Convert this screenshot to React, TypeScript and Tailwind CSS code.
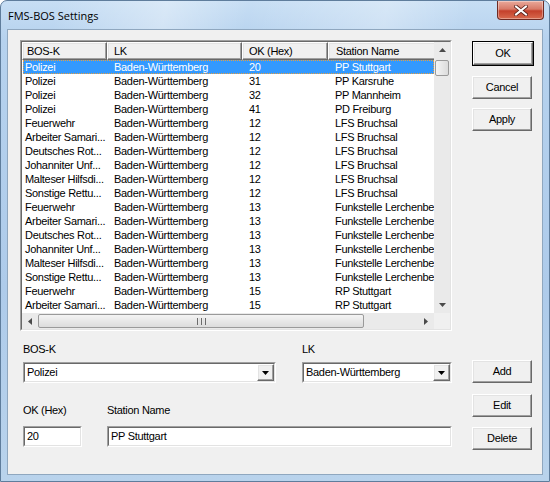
import React from 'react';

const rows: [string, string, string][] = [
  ['Polizei', '20', 'PP Stuttgart'],
  ['Polizei', '31', 'PP Karsruhe'],
  ['Polizei', '32', 'PP Mannheim'],
  ['Polizei', '41', 'PD Freiburg'],
  ['Feuerwehr', '12', 'LFS Bruchsal'],
  ['Arbeiter Samari...', '12', 'LFS Bruchsal'],
  ['Deutsches Rot...', '12', 'LFS Bruchsal'],
  ['Johanniter Unf...', '12', 'LFS Bruchsal'],
  ['Malteser Hilfsdi...', '12', 'LFS Bruchsal'],
  ['Sonstige Rettu...', '12', 'LFS Bruchsal'],
  ['Feuerwehr', '13', 'Funkstelle Lerchenberg'],
  ['Arbeiter Samari...', '13', 'Funkstelle Lerchenberg'],
  ['Deutsches Rot...', '13', 'Funkstelle Lerchenberg'],
  ['Johanniter Unf...', '13', 'Funkstelle Lerchenberg'],
  ['Malteser Hilfsdi...', '13', 'Funkstelle Lerchenberg'],
  ['Sonstige Rettu...', '13', 'Funkstelle Lerchenberg'],
  ['Feuerwehr', '15', 'RP Stuttgart'],
  ['Arbeiter Samari...', '15', 'RP Stuttgart'],
  ['Deutsches Rot...', '15', 'RP Stuttgart'],
];

const raised =
  'border border-t-white border-l-white border-r-[#696969] border-b-[#696969] shadow-[inset_-1px_-1px_0_#a0a0a0,inset_1px_1px_0_#e3e3e3] bg-[#f0f0f0]';

const Arrow = ({ dir, color = '#4a4a4a' }: { dir: 'up' | 'down' | 'left' | 'right'; color?: string }) => {
  const pts = {
    up: '0,4 7,4 3.5,0',
    down: '0,0 7,0 3.5,4',
    left: '4,0 4,7 0,3.5',
    right: '0,0 0,7 4,3.5',
  }[dir];
  const vertical = dir === 'up' || dir === 'down';
  return (
    <svg width={vertical ? 7 : 4} height={vertical ? 4 : 7} viewBox={vertical ? '0 0 7 4' : '0 0 4 7'}>
      <polygon points={pts} fill={color} />
    </svg>
  );
};

const Sunken = ({ className = '', children }: { className?: string; children?: React.ReactNode }) => (
  <div className={`border border-t-[#a0a0a0] border-l-[#a0a0a0] border-r-white border-b-white ${className}`}>
    <div className="h-full w-full border border-t-[#696969] border-l-[#696969] border-r-[#e3e3e3] border-b-[#e3e3e3] bg-white">
      {children}
    </div>
  </div>
);

const Button = ({ label, className = '' }: { label: string; className?: string }) => (
  <div className={`${raised} flex items-center justify-center w-[60px] h-[23px] text-[11px] text-black ${className}`}>
    {label}
  </div>
);

const Combo = ({ value, className = '' }: { value: string; className?: string }) => (
  <Sunken className={`h-[21px] ${className}`}>
    <div className="flex h-full items-center">
      <span className="flex-1 pl-[2px] text-[11px] leading-[13px]">{value}</span>
      <div className={`${raised} flex h-full w-[17px] items-center justify-center`}>
        <Arrow dir="down" color="#000" />
      </div>
    </div>
  </Sunken>
);

const Header = ({ label, w, pl }: { label: string; w: string; pl: string }) => (
  <div className={`${raised} ${w} ${pl} h-[18px] shrink-0 flex items-center text-[11px]`}>{label}</div>
);

const ListView = () => (
  <Sunken className="w-[432px] h-[291px]">
    <div className="flex h-full flex-col">
      <div className="flex min-h-0 flex-1">
        <div className="flex w-[412px] flex-col overflow-hidden">
          <div className="flex w-[460px]">
            <Header label="BOS-K" w="w-[85px]" pl="pl-[4px]" />
            <Header label="LK" w="w-[135px]" pl="pl-[6px]" />
            <Header label="OK (Hex)" w="w-[86px]" pl="pl-[6px]" />
            <Header label="Station Name" w="w-[154px]" pl="pl-[7px]" />
          </div>
          <div className="flex-1 overflow-hidden">
            {rows.map(([bos, ok, name], i) => (
              <div key={i} className="flex h-[14px] items-center text-[11px] leading-[14px] whitespace-nowrap">
                <div
                  className={`flex h-full w-[411px] items-center ${
                    i === 0 ? 'ml-[1px] bg-[#3399ff] text-white outline-1 outline-dotted outline-offset-[-1px] outline-[#e8a040]' : 'ml-[1px] text-black'
                  }`}
                >
                  <span className="w-[84px] shrink-0 overflow-hidden pl-[2px]">{bos}</span>
                  <span className="w-[135px] shrink-0 pl-[7px]">Baden-Württemberg</span>
                  <span className="w-[86px] shrink-0 pl-[7px]">{ok}</span>
                  <span className="shrink-0 pl-[7px]">{name}</span>
                </div>
              </div>
            ))}
          </div>
        </div>
        {/* vertical scrollbar */}
        <div className="flex w-[16px] flex-col bg-[#eaeaea]">
          <div className="flex h-[16px] items-center justify-center">
            <Arrow dir="up" />
          </div>
          <div className="mx-[1px] mt-[2px] h-[16px] rounded-[2px] border border-[#9a9a9a] bg-[linear-gradient(90deg,#f4f4f4,#dcdcdc)]" />
          <div className="flex-1" />
          <div className="flex h-[16px] items-center justify-center">
            <Arrow dir="down" />
          </div>
        </div>
      </div>
      {/* horizontal scrollbar */}
      <div className="flex h-[16px]">
        <div className="flex w-[412px] bg-[#eaeaea]">
          <div className="flex w-[16px] items-center justify-center">
            <Arrow dir="left" />
          </div>
          <div className="my-[1px] flex w-[326px] items-center justify-center rounded-[2px] border border-[#9a9a9a] bg-[linear-gradient(180deg,#f4f4f4,#dcdcdc)]">
            <div className="flex gap-[1px]">
              <div className="h-[7px] w-[1px] bg-[#6b6b6b]" />
              <div className="h-[7px] w-[1px] bg-[#e0e0e0]" />
              <div className="h-[7px] w-[1px] bg-[#6b6b6b]" />
              <div className="h-[7px] w-[1px] bg-[#e0e0e0]" />
              <div className="h-[7px] w-[1px] bg-[#6b6b6b]" />
            </div>
          </div>
          <div className="flex-1" />
          <div className="flex w-[16px] items-center justify-center">
            <Arrow dir="right" />
          </div>
        </div>
        <div className="w-[16px] bg-[#f0f0f0]" />
      </div>
    </div>
  </Sunken>
);

export default function App() {
  return (
    <div className="w-[550px] h-[482px] overflow-hidden font-['Liberation_Sans',Arial,sans-serif]">
      <div className="flex h-full flex-col rounded-t-[7px] border border-[#5f7d9c] bg-[linear-gradient(180deg,#c7def4_0%,#b6d2ee_8%,#aecbea_60%,#b9d3ec_100%)]">
        {/* title bar */}
        <div className="flex h-[28px] shrink-0 items-start bg-[linear-gradient(100deg,rgba(255,255,255,0)_10%,rgba(255,255,255,0.35)_30%,rgba(255,255,255,0)_45%,rgba(255,255,255,0.3)_70%,rgba(255,255,255,0)_85%)]">
          <span className="self-center pl-[7px] pt-[2px] font-['Open_Sans',sans-serif] text-[11px] text-black">FMS-BOS Settings</span>
          <div className="flex-1" />
          <div className="mr-[5px] flex h-[19px] w-[47px] items-center justify-center rounded-b-[4px] border border-t-0 border-[#6e2a22] bg-[linear-gradient(180deg,#e9a99b_0%,#d77a68_45%,#c4402b_55%,#d86a4e_100%)] shadow-[inset_0_0_0_1px_rgba(255,255,255,0.35)]">
            <svg width="14" height="11" viewBox="0 0 14 11">
              <path d="M2 1.5 L12 9.5 M12 1.5 L2 9.5" stroke="#5a2019" strokeWidth="3.6" strokeLinecap="square" />
              <path d="M2 1.5 L12 9.5 M12 1.5 L2 9.5" stroke="#ffffff" strokeWidth="2" strokeLinecap="square" />
            </svg>
          </div>
        </div>
        {/* client area */}
        <div className="mx-[6px] mb-[6px] flex-1 border border-[#8fa7bf] bg-[#f0f0f0] text-black tracking-[-0.3px]">
          <div className="flex pl-[12px] pt-[10px]">
            <ListView />
            <div className="ml-[20px] flex flex-col">
              <div className="mt-[1px] border border-black">
                <Button label="OK" className="w-[58px] h-[21px]" />
              </div>
              <Button label="Cancel" className="mt-[10px]" />
              <Button label="Apply" className="mt-[9px]" />
            </div>
          </div>
          <div className="flex pl-[15px]">
            <div className="flex w-[429px] flex-col">
              <div className="mt-[12px] flex h-[13px] text-[11px] leading-[13px]">
                <span className="w-[279px]">BOS-K</span>
                <span>LK</span>
              </div>
              <div className="mt-[6px] flex">
                <Combo value="Polizei" className="w-[253px]" />
                <Combo value="Baden-Württemberg" className="ml-[26px] w-[150px]" />
              </div>
              <div className="mt-[21px] flex h-[13px] text-[11px] leading-[13px]">
                <span className="w-[84px]">OK (Hex)</span>
                <span>Station Name</span>
              </div>
              <div className="mt-[9px] flex">
                <Sunken className="h-[21px] w-[59px]">
                  <div className="flex h-full items-center pl-[2px] text-[11px]">20</div>
                </Sunken>
                <Sunken className="ml-[25px] h-[21px] w-[345px]">
                  <div className="flex h-full items-center pl-[2px] text-[11px]">PP Stuttgart</div>
                </Sunken>
              </div>
            </div>
            <div className="ml-[20px] flex flex-col">
              <Button label="Add" className="mt-[29px] h-[22px]" />
              <Button label="Edit" className="mt-[11px] h-[22px]" />
              <Button label="Delete" className="mt-[10px] h-[22px]" />
            </div>
          </div>
        </div>
      </div>
    </div>
  );
}
